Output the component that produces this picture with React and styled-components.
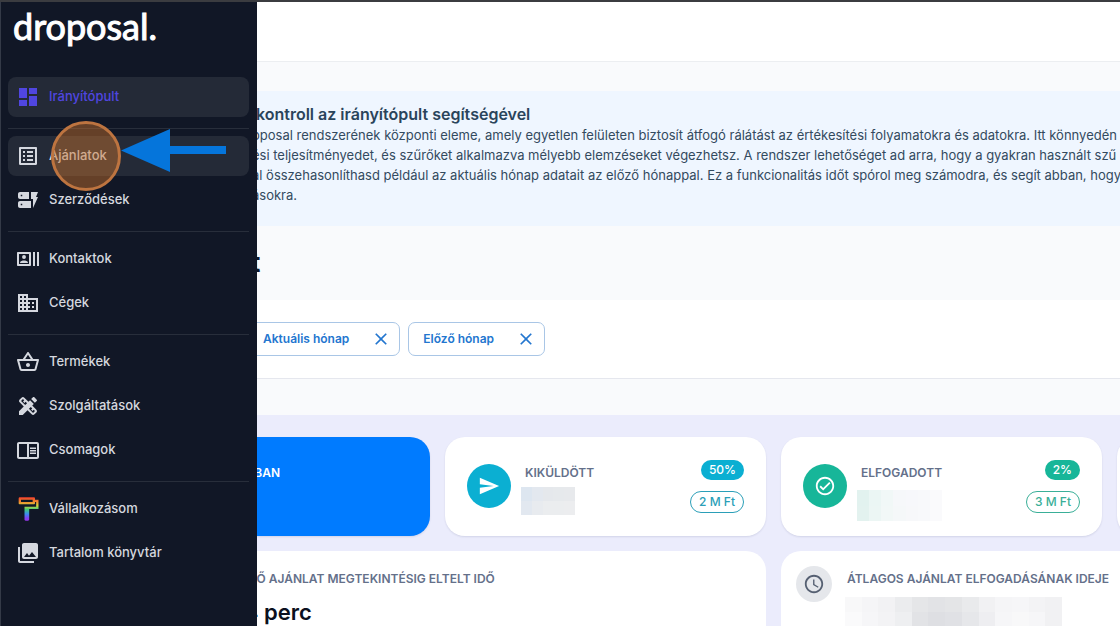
import React from "react";
import styled, { createGlobalStyle } from "styled-components";
import {
  MdDashboard,
  MdOutlineListAlt,
  MdDynamicForm,
  MdOutlineRecentActors,
  MdOutlineDomain,
  MdOutlineShoppingBasket,
  MdDesignServices,
  MdOutlineChromeReaderMode,
  MdOutlineFormatPaint,
  MdPhotoLibrary,
  MdSend,
  MdOutlineCheckCircle,
  MdOutlineSchedule,
  MdTrendingUp,
  MdClose,
} from "react-icons/md";

const GlobalStyle = createGlobalStyle`
  * { box-sizing: border-box; }
  body {
    margin: 0;
    background: #f9fafc;
    font-family: Inter, "Liberation Sans", sans-serif;
    color: #0f172a;
    overflow: hidden;
  }
  h1, h2, h3, p, ul { margin: 0; padding: 0; }
  button { font-family: inherit; cursor: pointer; }
`;

const Page = styled.div`
  position: relative;
  min-height: 100vh;
  border-top: 2px solid #3b3c40;
`;

const Sidebar = styled.aside`
  position: absolute;
  z-index: 2;
  top: 0;
  bottom: 0;
  left: 0;
  width: 257px;
  padding: 4px 8px 0 7px;
  background: #111726;
  border-left: 1px solid #343a47;
`;

const Logo = styled.a`
  display: block;
  height: 71px;
  padding-left: 5px;
  color: #fff;
  font-family: Lato, sans-serif;
  font-size: 36px;
  line-height: 40px;
  text-decoration: none;
  -webkit-text-stroke: 1px #fff;
`;

const NavGroup = styled.ul`
  display: flex;
  flex-direction: column;
  gap: 4px;
  list-style: none;

  & + & {
    margin-top: 11px;
    padding-top: 7px;
    border-top: 1px solid #282e3b;
  }
`;

const NavLink = styled.a`
  display: flex;
  align-items: center;
  gap: 9px;
  height: 40px;
  padding: 0 8px;
  border-radius: 8px;
  background: ${(p) => (p.$raised ? "#242a37" : "transparent")};
  color: ${(p) => (p.$active ? "#5046e0" : "#d5d8df")};
  font-size: 13px;
  font-weight: 500;
  line-height: 20px;
  text-decoration: none;
`;

const NavIcon = styled.span`
  display: flex;
  flex: none;
  align-items: center;
  justify-content: center;
  width: 24px;
  height: 24px;

  svg { flex: none; }
`;

const NavLabel = styled.span`
  padding-bottom: 2px;
`;

const Highlight = styled.span`
  position: absolute;
  z-index: 3;
  top: 119px;
  left: 51px;
  width: 70px;
  height: 70px;
  border: 3px solid #bd7440;
  border-radius: 50%;
  background: rgba(205, 115, 45, 0.45);
  pointer-events: none;
`;

const Pointer = styled.svg`
  position: absolute;
  z-index: 3;
  top: 127px;
  left: 121px;
  pointer-events: none;
`;

const Main = styled.main`
  overflow: hidden;
`;

const TopBar = styled.header`
  height: 60px;
  background: #fff;
  border-bottom: 1px solid #eceef1;
`;

const Banner = styled.section`
  margin-top: 29px;
  padding: 12px 0 21px 252px;
  background: #eff6ff;
  color: #334a5e;
  white-space: nowrap;
`;

const BannerTitle = styled.h2`
  padding-left: 4px;
  color: #2a445b;
  font-size: 16px;
  font-weight: 600;
  line-height: 22px;
`;

const BannerLine = styled.span`
  display: block;
  font-size: 13px;
  font-weight: 400;
  line-height: 20px;
`;

const TitleRow = styled.div`
  padding: 22px 0 22px 109px;
`;

const PageTitle = styled.h1`
  font-size: 27px;
  font-weight: 700;
  line-height: 30px;
`;

const FilterBar = styled.div`
  display: flex;
  gap: 8px;
  padding: 22px 24px 22px 248px;
  background: #fff;
  border-bottom: 1px solid #e5e7ee;
`;

const Chip = styled.div`
  display: flex;
  align-items: center;
  gap: 22px;
  height: 34px;
  padding: 0 8px 0 14px;
  border: 1px solid #a9c6e6;
  border-radius: 7px;
  background: #fff;
`;

const ChipButton = styled.button`
  display: flex;
  padding: 0;
  border: 0;
  background: none;
  color: #2376cf;
  font-size: 12px;
  font-weight: 600;
  line-height: 20px;
`;

const Stats = styled.section`
  display: grid;
  grid-template-columns: repeat(4, minmax(321px, 1fr));
  gap: 15px;
  margin-top: 36px;
  padding: 22px 24px 22px 109px;
  background: #ebecfc;
`;

const StatCard = styled.article`
  display: flex;
  gap: 14px;
  height: 99px;
  padding: 23px 22px 22px;
  border-radius: 20px;
  background: ${(p) => (p.$primary ? "#007bff" : "#fff")};
  color: ${(p) => (p.$primary ? "#fff" : "#64708a")};
  box-shadow: 0 1px 2px rgba(30, 40, 90, 0.12);
`;

const WideCard = styled.article`
  display: flex;
  grid-column: span 2;
  gap: 15px;
  height: 99px;
  padding: 15px;
  border-radius: 20px;
  background: #fff;
  color: #64708a;
`;

const RoundIcon = styled.span`
  display: flex;
  flex: none;
  align-items: center;
  justify-content: center;
  width: ${(p) => p.$size}px;
  height: ${(p) => p.$size}px;
  margin-top: ${(p) => (p.$size > 40 ? 4 : 0)}px;
  border-radius: 50%;
  background: ${(p) => p.$bg};
  color: ${(p) => p.$color || "#fff"};
`;

const StatBody = styled.div`
  flex: 1;
  padding-top: 4px;
`;

const StatLabel = styled.h3`
  font-size: 12px;
  font-weight: 600;
  line-height: 18px;
`;

const StatValue = styled.p`
  padding-top: 10px;
  color: #0b1020;
  font-size: 22px;
  font-weight: 600;
  line-height: 28px;
`;

const Badges = styled.div`
  display: flex;
  flex-direction: column;
  align-items: flex-end;
  gap: 11px;
`;

const Badge = styled.span`
  padding: 0 8px;
  border: ${(p) => (p.$outline ? `1px solid ${p.$tone}` : "0")};
  border-radius: 11px;
  background: ${(p) => (p.$outline ? "#fff" : p.$tone)};
  color: ${(p) => (p.$outline ? p.$tone : "#fff")};
  font-size: 12px;
  font-weight: 500;
  line-height: 20px;
`;

const Mosaic = styled.div`
  display: grid;
  grid-template-columns: repeat(${(p) => p.$cols}, 1fr);
  width: ${(p) => p.$width}px;
  height: ${(p) => p.$height}px;
  margin: ${(p) => p.$top}px 0 0 ${(p) => p.$pull}px;
`;

const Tile = styled.span`
  background: ${(p) => p.$c};
`;

const navGroups = [
  [{ label: "Irányítópult", Icon: MdDashboard, active: true, raised: true }],
  [
    { label: "Ajánlatok", Icon: MdOutlineListAlt, raised: true },
    { label: "Szerződések", Icon: MdDynamicForm },
  ],
  [
    { label: "Kontaktok", Icon: MdOutlineRecentActors },
    { label: "Cégek", Icon: MdOutlineDomain },
  ],
  [
    { label: "Termékek", Icon: MdOutlineShoppingBasket },
    { label: "Szolgáltatások", Icon: MdDesignServices },
    { label: "Csomagok", Icon: MdOutlineChromeReaderMode },
  ],
  [
    { label: "Vállalkozásom", Icon: MdOutlineFormatPaint, rainbow: true },
    { label: "Tartalom könyvtár", Icon: MdPhotoLibrary },
  ],
];

const bannerLines = [
  "oposal rendszerének központi eleme, amely egyetlen felületen biztosít átfogó rálátást az értékesítési folyamatokra és adatokra. Itt könnyedén",
  "ési teljesítményedet, és szűrőket alkalmazva mélyebb elemzéseket végezhetsz. A rendszer lehetőséget ad arra, hogy a gyakran használt szű",
  "al összehasonlíthasd például az aktuális hónap adatait az előző hónappal. Ez a funkcionalitás időt spórol meg számodra, és segít abban, hogy",
  "ásokra.",
];

const sentTiles = ["#dde6f0", "#e3e8ef", "#e5e8ec", "#e6e9ec", "#e7e9ec", "#e2e8f0", "#e8ebef", "#ebedef", "#ebedef", "#ecedef"];
const acceptedTiles = ["#e2f2ef", "#ebf6f4", "#f1f8f7", "#f6f8fa", "#f7f8fb", "#f8f9fb", "#fafafc", "#e3f2ef", "#ecf6f4", "#f2f8f7", "#f5f8f9", "#f7f8fa", "#f8f9fb", "#fafafc"];
const timeTiles = [
  "#f8f8f9", "#f5f5f7", "#f2f2f4", "#ebecee", "#e5e6e8", "#e2e3e6", "#e4e5e7", "#e9eaec", "#f1f1f3", "#f5f5f7", "#f6f6f8", "#f3f3f5", "#f1f1f3",
  "#fafafb", "#f6f6f8", "#f3f3f5", "#eeeff1", "#e2e3e6", "#dedfe3", "#e0e1e5", "#e6e7ea", "#eeeef1", "#f6f6f8", "#f8f8f9", "#f6f6f8", "#f1f1f3",
];

function Tiles({ colors, ...rest }) {
  return (
    <Mosaic aria-hidden="true" {...rest}>
      {colors.map((c, i) => (
        <Tile key={i} $c={c} />
      ))}
    </Mosaic>
  );
}

export default function App() {
  return (
    <Page>
      <GlobalStyle />
      <svg width="0" height="0" style={{ display: "block" }} aria-hidden="true">
        <linearGradient id="rainbow" gradientUnits="userSpaceOnUse" x1="0" y1="2" x2="0" y2="23">
          <stop offset="0" stopColor="#f0402c" />
          <stop offset="0.2" stopColor="#f0902c" />
          <stop offset="0.35" stopColor="#c8d840" />
          <stop offset="0.5" stopColor="#40c878" />
          <stop offset="0.68" stopColor="#3b8cf0" />
          <stop offset="0.85" stopColor="#8040f0" />
          <stop offset="1" stopColor="#a030e8" />
        </linearGradient>
      </svg>

      <Sidebar>
        <Logo href="#">droposal.</Logo>
        <nav>
          {navGroups.map((group, g) => (
            <NavGroup key={g}>
              {group.map(({ label, Icon, active, raised, rainbow }) => (
                <li key={label}>
                  <NavLink href="#" $active={active} $raised={raised}>
                    <NavIcon>
                      <Icon size={rainbow ? 28 : 24} fill={rainbow ? "url(#rainbow)" : "currentColor"} />
                    </NavIcon>
                    <NavLabel>{label}</NavLabel>
                  </NavLink>
                </li>
              ))}
            </NavGroup>
          ))}
        </nav>
      </Sidebar>
      <Highlight />
      <Pointer width="106" height="43" viewBox="0 0 106 43" aria-hidden="true">
        <path d="M0 21.5 49 0v17h56v8H49v18z" fill="#0575db" />
      </Pointer>

      <Main>
        <TopBar />
        <Banner>
          <BannerTitle>kontroll az irányítópult segítségével</BannerTitle>
          <p>
            {bannerLines.map((line) => (
              <BannerLine key={line}>{line}</BannerLine>
            ))}
          </p>
        </Banner>
        <TitleRow>
          <PageTitle>Irányítópult</PageTitle>
        </TitleRow>
        <FilterBar>
          {["Aktuális hónap", "Előző hónap"].map((name) => (
            <Chip key={name}>
              <ChipButton>{name}</ChipButton>
              <ChipButton aria-label={`${name} törlése`}>
                <MdClose size={20} />
              </ChipButton>
            </Chip>
          ))}
        </FilterBar>
        <Stats>
          <StatCard $primary>
            <RoundIcon $size={44} $bg="#3395ff">
              <MdTrendingUp size={22} />
            </RoundIcon>
            <StatBody>
              <StatLabel>FOLYAMATBAN</StatLabel>
            </StatBody>
          </StatCard>
          <StatCard>
            <RoundIcon $size={44} $bg="#0bafd2">
              <MdSend size={22} />
            </RoundIcon>
            <StatBody>
              <StatLabel>KIKÜLDÖTT</StatLabel>
              <Tiles colors={sentTiles} $cols={5} $width={54} $height={28} $top={5} $pull={-4} />
            </StatBody>
            <Badges>
              <Badge $tone="#0bafd2">50%</Badge>
              <Badge $tone="#2b9fb8" $outline>2 M Ft</Badge>
            </Badges>
          </StatCard>
          <StatCard>
            <RoundIcon $size={44} $bg="#17b699">
              <MdOutlineCheckCircle size={22} />
            </RoundIcon>
            <StatBody>
              <StatLabel>ELFOGADOTT</StatLabel>
              <Tiles colors={acceptedTiles} $cols={7} $width={85} $height={31} $top={8} $pull={-4} />
            </StatBody>
            <Badges>
              <Badge $tone="#17b699">2%</Badge>
              <Badge $tone="#3aaf98" $outline>3 M Ft</Badge>
            </Badges>
          </StatCard>
          <StatCard />
          <WideCard>
            <RoundIcon $size={36} $bg="#e5e7eb" $color="#566072">
              <MdOutlineSchedule size={22} />
            </RoundIcon>
            <StatBody>
              <StatLabel>ÁTLAGOS ELSŐ AJÁNLAT MEGTEKINTÉSIG ELTELT IDŐ</StatLabel>
              <StatValue>1 óra 54 perc</StatValue>
            </StatBody>
          </WideCard>
          <WideCard>
            <RoundIcon $size={36} $bg="#e5e7eb" $color="#566072">
              <MdOutlineSchedule size={22} />
            </RoundIcon>
            <StatBody>
              <StatLabel>ÁTLAGOS AJÁNLAT ELFOGADÁSÁNAK IDEJE</StatLabel>
              <Tiles colors={timeTiles} $cols={13} $width={217} $height={30} $top={9} $pull={-2} />
            </StatBody>
          </WideCard>
        </Stats>
      </Main>
    </Page>
  );
}
